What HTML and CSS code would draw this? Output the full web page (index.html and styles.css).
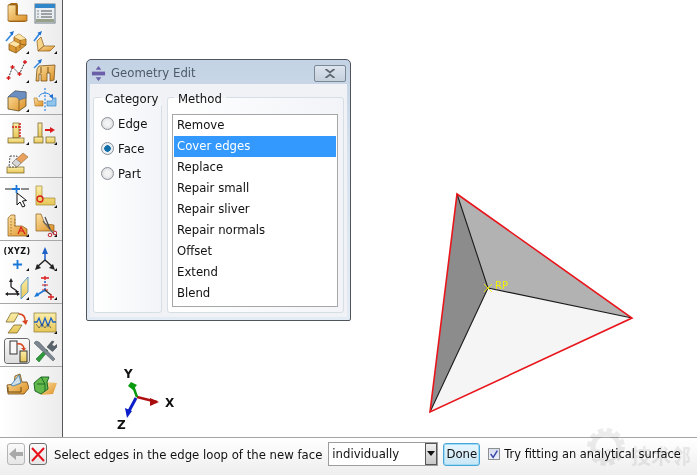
FILE: index.html
```html
<!DOCTYPE html>
<html lang="en">
<head>
    <meta charset="UTF-8">
    <meta name="viewport" content="width=device-width, initial-scale=1.0">
    <title>Geometry Edit</title>
    <link rel="stylesheet" href="styles.css">
</head>
<body>
    <svg class="defs" width="0" height="0">
        <defs>
            <linearGradient id="or" x1="0" y1="0" x2="1" y2="1"><stop offset="0" stop-color="#fde3a4"/><stop offset="1" stop-color="#dc8f24"/></linearGradient>
            <linearGradient id="ye" x1="0" y1="0" x2="0" y2="1"><stop offset="0" stop-color="#fbeeaa"/><stop offset="1" stop-color="#e6c657"/></linearGradient>
        </defs>
    </svg>
    <div class="app">
        <div class="main">
            <div class="toolbar">
                <div class="tool-group first">
                    <span class="tool"><svg viewBox="0 0 24 24"><path d="M6 2h6l1 2v10h9v5l-2 2H5l-2-1V4z" fill="#a86a14"/><path d="M3 4h8v10h11v6H3z" fill="url(#or)" stroke="#8a5a18" stroke-width=".7"/></svg></span>
                    <span class="tool"><svg viewBox="0 0 24 24"><rect x="2" y="3" width="20" height="19" fill="#e9eef2" stroke="#6d7c86"/><rect x="2" y="3" width="20" height="4" fill="#2f86c8"/><path d="M8 10h11M8 13h11M8 16h11" stroke="#555" stroke-width="1.2"/><path d="M4 10h2M4 13h2M4 16h2" stroke="#888" stroke-width="1.2"/><rect x="3" y="18" width="18" height="3" fill="#99a08a"/></svg></span>
                    <span class="tool flyout"><svg viewBox="0 0 24 24"><path d="M4 14l5-3V7l5-3 7 5v6l-10 8-7-3z" fill="#dc9a36" stroke="#8a5a18" stroke-width=".8"/><path d="M4 14l7 3v6M9 11l6 3v4M9 7l6 3v4M14 4l0 6M15 10l6-1M15 14l6 1" fill="none" stroke="#8a5a18" stroke-width=".8"/><path d="M9 7l5-3 7 5-6 1z" fill="#fde3a4"/><path d="M4 14l5-3 6 3-4 3z" fill="#fde3a4"/><path d="M1 11l6-7" stroke="#2f86e0" stroke-width="1.600"/><path d="M9 1L4.500 2.500 7.500 5.500z" fill="#1f6fd0"/></svg></span>
                    <span class="tool flyout"><svg viewBox="0 0 24 24"><path d="M8 7l3 9-6 5-1-10z" fill="#f6d48a" stroke="#8a5a18" stroke-width=".7"/><path d="M11 16h11l-5 5H5z" fill="url(#or)" stroke="#8a5a18" stroke-width=".7"/><path d="M1 11l6-8" stroke="#2f86e0" stroke-width="1.500"/><path d="M9 1L4.500 2.800 7.500 5.500z" fill="#1f6fd0"/></svg></span>
                    <span class="tool flyout"><svg viewBox="0 0 24 24"><path d="M3.500 19L7.500 8l7 7 5.500-12" fill="none" stroke="#222" stroke-width=".9" stroke-dasharray="2 1"/><path d="M1.500 19h4M3.500 17v4M5.500 8h4M7.500 6v4M12.500 15h4M14.500 13v4M18 3h4M20 1v4" stroke="#d81c1c" stroke-width="1.300"/></svg></span>
                    <span class="tool flyout"><svg viewBox="0 0 24 24"><path d="M4 10l2-3 16-1-1 15-4 1v-8h-3v8H8v-7H6v7H3z" fill="url(#or)" stroke="#7a5014" stroke-width=".8"/><path d="M8 8v6M15 8v6" stroke="#7a5014"/><path d="M1 9l7-7" stroke="#2f86e0" stroke-width="1.500"/><path d="M9 0L4.500 1.800 7.500 4.500z" fill="#1f6fd0"/></svg></span>
                    <span class="tool flyout"><svg viewBox="0 0 24 24"><path d="M3 9l7-6 11 1v14l-7 5-11-2z" fill="url(#or)" stroke="#5d4a20" stroke-width=".8"/><path d="M10 3l11 1v6l-7 2c-1-4-5-3-11-3z" fill="#6a8fc0" stroke="#46628c" stroke-width=".6"/><path d="M14 12v11" stroke="#7a5014" stroke-width=".8"/></svg></span>
                    <span class="tool"><svg viewBox="0 0 24 24"><path d="M1 10h3l1 3h5v5H2z" fill="url(#or)" stroke="#a87020" stroke-width=".6"/><path d="M20 10h3v8h-9v-5h5z" fill="#8fc4ec" stroke="#3a86c8" stroke-width=".7"/><path d="M12 0v24" stroke="#2f86e0" stroke-dasharray="2 1.500" stroke-width="1.200"/><path d="M6 9c1-5 10-5 12-1" fill="none" stroke="#2f86e0"/><path d="M20 11l0-5-4 2z" fill="#1f6fd0"/></svg></span>
                </div>
                <div class="tool-group">
                    <span class="tool flyout"><svg viewBox="0 0 24 24"><rect x="8" y="2" width="6" height="15" fill="url(#ye)" stroke="#6f5d1f" stroke-width=".7"/><rect x="3" y="17" width="16" height="5" fill="url(#ye)" stroke="#6f5d1f" stroke-width=".7"/><path d="M7 6h8M15 2v15" stroke="#d81c1c" stroke-width="1.500" stroke-dasharray="2 1"/></svg></span>
                    <span class="tool flyout"><svg viewBox="0 0 24 24"><rect x="5" y="2" width="4" height="15" fill="url(#ye)" stroke="#6f5d1f" stroke-width=".7"/><rect x="1" y="16" width="9" height="6" fill="url(#ye)" stroke="#6f5d1f" stroke-width=".7"/><rect x="13" y="16" width="9" height="6" fill="url(#ye)" stroke="#6f5d1f" stroke-width=".7"/><path d="M12 9h6" stroke="#d81c1c" stroke-width="2"/><path d="M22 9l-5-3v6z" fill="#d81c1c"/></svg></span>
                    <span class="tool"><svg viewBox="0 0 24 24"><rect x="2" y="17" width="17" height="6" fill="url(#ye)" stroke="#6f5d1f" stroke-width=".7"/><path d="M5 6h7v11H4z" fill="#f4f4f4" stroke="#333" stroke-width=".8" stroke-dasharray="2 1"/><path d="M7 13L18 3l5 4-11 10z" fill="#e8a05c" stroke="#8a6a3a" stroke-width=".6"/><path d="M7 13l4-4 5 4-4 4z" fill="#d6d6d6" stroke="#777" stroke-width=".6"/></svg></span>
                    <span class="tool blank"></span>
                </div>
                <div class="tool-group">
                    <span class="tool"><svg viewBox="0 0 24 24"><path d="M0 5h7M16 5h9" stroke="#222" stroke-width="1.200"/><path d="M7 5h8M11.500 1v8" stroke="#1c78d8" stroke-width="1.800"/><path d="M12 9v12l3-3 2.500 5 2.500-1-2.500-5 4-.5z" fill="#fff" stroke="#111"/></svg></span>
                    <span class="tool flyout"><svg viewBox="0 0 24 24"><path d="M3 2h6v12h13v7H3z" fill="url(#ye)" stroke="#a08a30" stroke-width=".7"/><circle cx="7" cy="15" r="3" fill="none" stroke="#d81c1c" stroke-width="1.300"/></svg></span>
                    <span class="tool flyout"><svg viewBox="0 0 24 24"><path d="M3 5l3-3h4v11h7l5 3v7H3z" fill="url(#or)" stroke="#8a5a18" stroke-width=".7"/><path d="M6 5v18M10 6v8" stroke="#a07020" stroke-dasharray="1.500 1.500"/><path d="M13 21l3-7 4 7M14 18h5" fill="none" stroke="#d81c1c" stroke-width="1.200"/></svg></span>
                    <span class="tool flyout"><svg viewBox="0 0 24 24"><path d="M3 1h5l4 10 9 1v6H3z" fill="url(#or)" stroke="#8a5a18" stroke-width=".7"/><path d="M10 8l11 13" stroke="#666" stroke-width="1.200"/><path d="M12 4l5 12" stroke="#444" stroke-width="1.200"/><circle cx="17" cy="22" r="1.800" fill="none" stroke="#c0202a"/><circle cx="22" cy="20" r="1.800" fill="none" stroke="#c0202a"/></svg></span>
                </div>
                <div class="tool-group">
                    <span class="tool flyout"><span class="xyz">(XYZ)</span><svg class="xyz-plus" viewBox="0 0 12 12"><path d="M1 6h10M6 1v10" stroke="#1c78d8" stroke-width="2"/></svg></span>
                    <span class="tool flyout"><svg viewBox="0 0 24 24"><path d="M12 13V2" stroke="#1c60c8" stroke-width="1.500"/><path d="M12 0l-3 7h6z" fill="#1c60c8"/><path d="M12 13l-8 7M12 13l8 7" stroke="#222" stroke-width="1.500"/><path d="M2 23l2-6 4 4zM22 23l-2-6-4 4z" fill="#222"/></svg></span>
                    <span class="tool flyout"><svg viewBox="0 0 24 24"><path d="M16 9l7-8v15l-7 7z" fill="url(#ye)" stroke="#3a86c8" stroke-width=".8"/><path d="M6 11v-7M6 11l6 4M1 18h13" stroke="#222" stroke-width="1.300"/><path d="M6 2L4 6h4zM14 15l-4 0 2 3zM0 18l3-2v4zM15 18l-3-2v4z" fill="#222"/></svg></span>
                    <span class="tool flyout"><svg viewBox="0 0 24 24"><path d="M8 2h8M12 0v4" stroke="#d81c1c" stroke-width="1.300"/><path d="M12 5v11" stroke="#1c60c8" stroke-dasharray="2 1.500" stroke-width="1.500"/><path d="M9 9h6M9 14h6" stroke="#d81c1c" stroke-width="1.200"/><path d="M12 14l-8 5" stroke="#1c78d8" stroke-width="1.500"/><path d="M12 14l6 5" stroke="#333" stroke-width="1.300"/><path d="M1 21l3-5 2 4z" fill="#1c78d8"/><path d="M15 21h6M18 18v6" stroke="#d81c1c" stroke-width="1.300"/></svg></span>
                </div>
                <div class="tool-group">
                    <span class="tool"><svg viewBox="0 0 24 24"><path d="M6 3h8l-5 9H1zM9 15h8l-5 8H3z" fill="url(#ye)" stroke="#6f5d1f" stroke-width=".7"/><path d="M14 4c4 0 7 3 6 8" fill="none" stroke="#d8421c" stroke-width="1.600"/><path d="M21 15l-4-4 6-1z" fill="#d8421c"/></svg></span>
                    <span class="tool flyout"><svg viewBox="0 0 24 24"><rect x="1" y="3" width="22" height="19" fill="url(#ye)" stroke="#8a7a30" stroke-width=".7"/><path d="M1 12h3l2-4 3 8 3-8 3 8 3-8 2 4h3" fill="none" stroke="#1c60c8" stroke-width="1.300"/><path d="M3 14l3 4 3-4 3 4 3-4 3 4" fill="none" stroke="#333" stroke-width=".6"/></svg></span>
                    <span class="tool selected"><svg viewBox="0 0 24 24"><rect x="5" y="2" width="7" height="13" fill="#f8f8f8" stroke="#333"/><rect x="15" y="12" width="7" height="11" fill="url(#ye)" stroke="#333"/><path d="M12 5c4-1 6 1 7 4" fill="none" stroke="#d8421c" stroke-width="1.500"/><path d="M19 12l-3-3h5z" fill="#d8421c"/></svg></span>
                    <span class="tool"><svg viewBox="0 0 24 24"><path d="M3 20L13 10l2 2L6 23z" fill="#2f9a3c" stroke="#1e6a28" stroke-width=".6"/><path d="M3 2l3 1 16 17-2 2L4 7 1 4z" fill="#7d8791" stroke="#4b545c" stroke-width=".5"/><path d="M14 8l5-6 2 .5-2 3 2 2 3-2 .5 2-5 5z" fill="#59636c" stroke="#394048" stroke-width=".5"/></svg></span>
                </div>
                <div class="tool-group">
                    <span class="tool"><svg viewBox="0 0 24 24"><path d="M2 12l7-1 1-8 5-2 2 8h5l2 6-5 6H3z" fill="url(#or)" stroke="#6e4a14" stroke-width=".8"/><path d="M6 12l8-10 2 8-8 3z" fill="#cfe0ea" stroke="#2f7ab8" stroke-width=".8"/><path d="M3 14v5h13v-5" fill="none" stroke="#6e4a14"/></svg></span>
                    <span class="tool"><svg viewBox="0 0 24 24"><path d="M12 9l12 1-4 11-12 1z" fill="url(#or)"/><path d="M1 10l7-6h8l-2 5 1 7-7 5-6-3z" fill="#62b84a" stroke="#1e6a28"/><path d="M4 11h8v7M8 4l4 7" fill="none" stroke="#1e6a28"/></svg></span>
                </div>
            </div>
            <div class="viewport">
                <svg class="model" viewBox="63 0 634 437">
                    <polygon points="457,194 488,288 430,412" fill="#8c8c8c"/>
                    <polygon points="457,194 632,318 488,288" fill="#b2b2b2"/>
                    <polygon points="488,288 632,318 430,412" fill="#f5f5f5"/>
                    <path d="M457 194L488 288M632 318L488 288M430 412L488 288" stroke="#1a1a1a" stroke-width="1.100" fill="none"/>
                    <polygon points="457,194 632,318 430,412" fill="none" stroke="#e8161c" stroke-width="1.600"/>
                    <path d="M484 284l8 8M484 292l8-8" stroke="#f2f200" stroke-width=".9"/>
                    <text class="rp" x="495" y="289">RP</text>

                    <path d="M137 397L157 402" stroke="#b01010" stroke-width="2.500"/>
                    <path d="M159 402l-9-4v8z" fill="#a80c0c"/>
                    <path d="M137 397L133 386" stroke="#0a9a10" stroke-width="2.500"/>
                    <path d="M131 382l-3 4 5 4 4-5z" fill="#0a9a10"/>
                    <path d="M136 398L129 411" stroke="#0c1ec8" stroke-width="3"/>
                    <path d="M127 418l-2-10 7 3z" fill="#0c1ec8"/>
                    <text class="axis" x="124" y="378">Y</text>
                    <text class="axis" x="165" y="407">X</text>
                    <text class="axis" x="117" y="429">Z</text>
                </svg>
                <div class="dialog">
                    <div class="dialog-title">
                        <svg class="dialog-icon" viewBox="0 0 16 16"><path d="M8 0l3 4H5zM8 16l-3-4h6z" fill="#6a5fa8"/><rect x="1" y="6" width="14" height="4" fill="#6a5fa8"/></svg>
                        <span>Geometry Edit</span>
                        <button class="dialog-close"><svg viewBox="0 0 10 8"><path d="M1 0l4 3 4-3M1 8l4-3 4 3" fill="none" stroke="#5d6670" stroke-width="1.600"/></svg></button>
                    </div>
                    <div class="dialog-body">
                        <fieldset class="category">
                            <legend>Category</legend>
                            <label class="radio"><span class="radio-dot"></span>Edge</label>
                            <label class="radio"><span class="radio-dot on"></span>Face</label>
                            <label class="radio"><span class="radio-dot"></span>Part</label>
                        </fieldset>
                        <fieldset class="method">
                            <legend>Method</legend>
                            <ul class="method-list">
                                <li>Remove</li>
                                <li class="active">Cover edges</li>
                                <li>Replace</li>
                                <li>Repair small</li>
                                <li>Repair sliver</li>
                                <li>Repair normals</li>
                                <li>Offset</li>
                                <li>Extend</li>
                                <li>Blend</li>
                            </ul>
                        </fieldset>
                    </div>
                </div>
            </div>
        </div>
        <div class="prompt">
            <button class="icon-btn back"><svg viewBox="0 0 16 16"><path d="M1 8l7-6v4h7v4H8v4z" fill="#a9a9a9"/></svg></button>
            <button class="icon-btn cancel"><svg viewBox="0 0 16 16"><path d="M2 2l12 13M14 2L2 15" stroke="#e8101c" stroke-width="2"/></svg></button>
            <span class="prompt-text">Select edges in the edge loop of the new face</span>
            <div class="combo"><span>individually</span><i class="combo-arrow"></i></div>
            <button class="done">Done</button>
            <label class="check"><span class="check-box"><svg viewBox="0 0 12 12"><path d="M2 6l3 4 5-8" fill="none" stroke="#3a4aa8" stroke-width="1.800"/></svg></span><span class="check-text">Try fitting an analytical surface</span></label>
        </div>
        <div class="watermark">
            <svg viewBox="0 0 40 40"><circle cx="20" cy="20" r="16" fill="none" stroke="#ececec" stroke-width="6" stroke-dasharray="5 3.400"/><circle cx="20" cy="20" r="13" fill="none" stroke="#ececec" stroke-width="5"/><circle cx="11" cy="28" r="5" fill="#fff" stroke="#ececec" stroke-width="2"/><circle cx="23" cy="28" r="5" fill="#fff" stroke="#ececec" stroke-width="2"/></svg>
            <span>技术邻</span>
        </div>
    </div>
</body>
</html>
```

FILE: styles.css
```css
* {
    box-sizing: border-box;
}
html, body {
    margin: 0;
    height: 100%;
    overflow: hidden;
}
body {
    font-family: "DejaVu Sans", sans-serif;
    font-size: 11.700px;
    color: #111;
    background: #fff;
}
.defs {
    position: absolute;
}
.app {
    position: relative;
    display: flex;
    flex-direction: column;
    width: 697px;
    height: 475px;
}
.main {
    display: flex;
    height: 438px;
    border-bottom: 1px solid #a5a5a5;
}
.toolbar {
    width: 63px;
    flex: none;
    background: linear-gradient(to right, #fff, #ececec);
    border-right: 1px solid #55585c;
}
.tool-group {
    display: grid;
    grid-template-columns: 24px 24px;
    grid-auto-rows: 24px;
    gap: 5px 4px;
    padding: 6px 5px 3px;
    border-bottom: 1px solid #a8a8a8;
}
.tool-group.first {
    padding: 1px 5px 2px;
}
.tool-group:last-child {
    border-bottom: 0;
}
.tool {
    position: relative;
    display: block;
}
.tool svg {
    display: block;
    width: 24px;
    height: 24px;
}
.flyout::after {
    content: "";
    position: absolute;
    right: 0;
    bottom: 0;
    border-left: 3px solid transparent;
    border-bottom: 3px solid #111;
}
.selected {
    border-radius: 3px;
    box-shadow: 0 0 0 1px #6b6b6b;
    background: linear-gradient(#fafafa, #dcdcdc);
}
.xyz {
    display: block;
    font-size: 8px;
    font-weight: bold;
    letter-spacing: .4px;
    text-align: center;
    white-space: nowrap;
    margin: 0 -2px;
    line-height: 10px;
}
.tool .xyz-plus {
    width: 11px;
    height: 11px;
    margin: 2px auto 0;
}
.viewport {
    position: relative;
    flex: 1;
    background: #fff;
}
.model {
    position: absolute;
    left: 0;
    top: 0;
    width: 634px;
    height: 437px;
}
.rp {
    font-size: 10px;
    fill: #f2f200;
}
.axis {
    font-size: 12px;
    font-weight: bold;
    fill: #111;
}
.dialog {
    position: absolute;
    left: 23px;
    top: 59px;
    width: 265px;
    height: 262px;
    display: flex;
    flex-direction: column;
    padding: 0 3px 3px;
    border: 1px solid #50555b;
    border-radius: 5px 5px 2px 2px;
    background: linear-gradient(#c3d2e4, #d9e4f0 40%, #e3ebf4);
}
.dialog-title {
    display: flex;
    align-items: center;
    height: 24px;
    flex: none;
    color: #4e5a68;
    padding-top: 2px;
}
.dialog-icon {
    width: 15px;
    height: 15px;
    margin: 0 5px 0 1px;
}
.dialog-close {
    width: 32px;
    height: 17px;
    margin-left: auto;
    margin-right: 1px;
    padding: 0;
    display: flex;
    align-items: center;
    justify-content: center;
    border: 1px solid #7a8794;
    border-radius: 2px;
    background: linear-gradient(#dde5ee, #c5d0dc);
}
.dialog-close svg {
    width: 12px;
    height: 9px;
}
.dialog-body {
    flex: 1;
    display: flex;
    gap: 5px;
    padding: 5px 3px 4px;
    background: #f0f2f6;
}
fieldset {
    margin: 0;
    min-width: 0;
    border: 1px solid #d5dfe5;
    border-radius: 3px;
    background: linear-gradient(to right, #fff, #f2f4f8);
}
legend {
    padding: 3px 4px 0;
    color: #111;
}
.category {
    width: 69px;
    padding: 5px 0 0 7px;
}
.radio {
    display: flex;
    align-items: center;
    gap: 4px;
    height: 25px;
}
.radio-dot {
    width: 13px;
    height: 13px;
    flex: none;
    border: 1px solid #8a9099;
    border-radius: 50%;
    background: radial-gradient(circle, #f4f4f4 30%, #cfd2d6);
}
.radio-dot.on {
    background: radial-gradient(circle, #0f6ea8 0 3px, #e8eef2 3.500px);
}
.method {
    flex: 1;
    padding: 8px 5px 0 4px;
}
.method legend {
    margin-left: 2px;
}
.method-list {
    list-style: none;
    margin: 0;
    padding: 0 1px;
    height: 193px;
    border: 1px solid #a6a6a6;
    background: #fff;
}
.method-list li {
    height: 21px;
    line-height: 21px;
    padding-left: 3px;
}
.method-list .active {
    background: #3399ff;
    color: #fff;
}
.prompt {
    flex: 1;
    display: flex;
    align-items: center;
    padding: 0 0 5px 7px;
    background: linear-gradient(#fff, #eeeeee);
}
.icon-btn {
    width: 18px;
    height: 22px;
    padding: 0;
    border: 1px solid #b5b5b5;
    border-radius: 3px;
    background: linear-gradient(#fafafa, #e6e6e6);
}
.icon-btn svg {
    display: block;
    width: 16px;
    height: 16px;
}
.cancel {
    margin-left: 4px;
    border-color: #6f6f6f;
}
.prompt-text {
    margin-left: 7px;
    padding-top: 1px;
    white-space: nowrap;
}
.combo {
    width: 110px;
    height: 24px;
    margin-left: 6px;
    display: flex;
    align-items: center;
    padding-left: 3px;
    border: 1px solid #9d9d9d;
    background: #fff;
}
.combo-arrow {
    position: relative;
    width: 12px;
    height: 22px;
    margin-left: auto;
    border: 1px solid #555;
    background: linear-gradient(#f0f0f0, #c8c8c8);
}
.combo-arrow::after {
    content: "";
    position: absolute;
    left: 1px;
    top: 7px;
    border-left: 4px solid transparent;
    border-right: 4px solid transparent;
    border-top: 5px solid #111;
}
.done {
    width: 37px;
    height: 23px;
    margin-left: 5px;
    padding: 0;
    font: inherit;
    color: #111;
    border: 1px solid #4aa6d8;
    border-radius: 3px;
    background: linear-gradient(#e8f6fd, #c8e6f6);
    box-shadow: inset 0 0 0 1px #9edcf6;
}
.check {
    display: flex;
    align-items: center;
    margin-left: 8px;
    gap: 4px;
    white-space: nowrap;
}
.check-text {
    font-size: 11.400px;
}
.check-box {
    width: 12px;
    height: 12px;
    border: 1px solid #8e8f8f;
    background: linear-gradient(#d6dcf0, #eef0fa);
}
.check-box svg {
    display: block;
    width: 10px;
    height: 10px;
}
.watermark {
    position: absolute;
    left: 586px;
    top: 423px;
    display: flex;
    align-items: center;
    gap: 5px;
    pointer-events: none;
    mix-blend-mode: multiply;
}
.watermark svg {
    width: 40px;
    height: 40px;
}
.watermark span {
    font-family: "Noto Sans CJK SC", sans-serif;
    font-size: 20px;
    font-weight: bold;
    color: #ececec;
    margin-top: 18px;
}
```
